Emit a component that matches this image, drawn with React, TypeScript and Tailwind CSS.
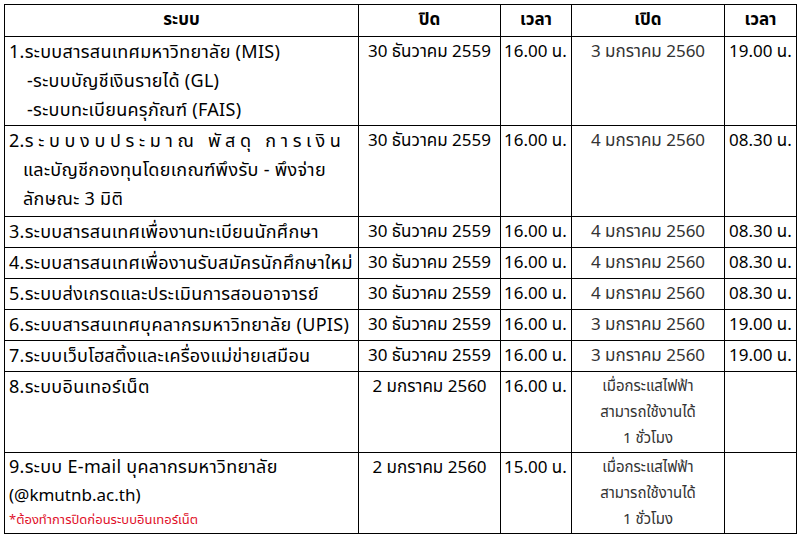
import React from 'react';

type Row = {
  system: React.ReactNode;
  closeDate: string;
  closeTime: string;
  openDate: React.ReactNode;
  openTime: string;
  h: string;
};

const th = 'border border-black font-bold text-center align-middle';
const td = 'border border-black align-top';

const afterPower = (
  <div className="text-[15px] leading-[26px] pt-[1px]">
    เมื่อกระแสไฟฟ้า
    <br />
    สามารถใช้งานได้
    <br />1 ชั่วโมง
  </div>
);

const rows: Row[] = [
  {
    system: (
      <div className="leading-[29px]">
        <div>1.ระบบสารสนเทศมหาวิทยาลัย (MIS)</div>
        <div className="pl-[18px]">-ระบบบัญชีเงินรายได้ (GL)</div>
        <div className="pl-[18px]">-ระบบทะเบียนครุภัณฑ์ (FAIS)</div>
      </div>
    ),
    closeDate: '30 ธันวาคม 2559',
    closeTime: '16.00 น.',
    openDate: '3 มกราคม 2560',
    openTime: '19.00 น.',
    h: 'h-[89px]',
  },
  {
    system: (
      <div className="leading-[29px]">
        <div className="whitespace-nowrap">
          2.<span className="tracking-[0.26em]">ระบบงบประมาณ พัสดุ การเงิน</span>
        </div>
        <div className="pl-[14px] whitespace-nowrap">และบัญชีกองทุนโดยเกณฑ์พึงรับ - พึงจ่าย</div>
        <div className="pl-[14px]">ลักษณะ 3 มิติ</div>
      </div>
    ),
    closeDate: '30 ธันวาคม 2559',
    closeTime: '16.00 น.',
    openDate: '4 มกราคม 2560',
    openTime: '08.30 น.',
    h: 'h-[91px]',
  },
  {
    system: '3.ระบบสารสนเทศเพื่องานทะเบียนนักศึกษา',
    closeDate: '30 ธันวาคม 2559',
    closeTime: '16.00 น.',
    openDate: '4 มกราคม 2560',
    openTime: '08.30 น.',
    h: 'h-[31px]',
  },
  {
    system: '4.ระบบสารสนเทศเพื่องานรับสมัครนักศึกษาใหม่',
    closeDate: '30 ธันวาคม 2559',
    closeTime: '16.00 น.',
    openDate: '4 มกราคม 2560',
    openTime: '08.30 น.',
    h: 'h-[31px]',
  },
  {
    system: '5.ระบบส่งเกรดและประเมินการสอนอาจารย์',
    closeDate: '30 ธันวาคม 2559',
    closeTime: '16.00 น.',
    openDate: '4 มกราคม 2560',
    openTime: '08.30 น.',
    h: 'h-[31px]',
  },
  {
    system: '6.ระบบสารสนเทศบุคลากรมหาวิทยาลัย (UPIS)',
    closeDate: '30 ธันวาคม 2559',
    closeTime: '16.00 น.',
    openDate: '3 มกราคม 2560',
    openTime: '19.00 น.',
    h: 'h-[31px]',
  },
  {
    system: '7.ระบบเว็บโฮสติ้งและเครื่องแม่ข่ายเสมือน',
    closeDate: '30 ธันวาคม 2559',
    closeTime: '16.00 น.',
    openDate: '3 มกราคม 2560',
    openTime: '19.00 น.',
    h: 'h-[31px]',
  },
  {
    system: '8.ระบบอินเทอร์เน็ต',
    closeDate: '2 มกราคม 2560',
    closeTime: '16.00 น.',
    openDate: afterPower,
    openTime: '',
    h: 'h-[81px]',
  },
  {
    system: (
      <div className="leading-[28px]">
        <div>9.ระบบ E-mail บุคลากรมหาวิทยาลัย</div>
        <div className="text-[17px] tracking-normal">(@kmutnb.ac.th)</div>
        <div className="text-[13px] leading-[20px] tracking-normal text-[#e0102a]">*ต้องทำการปิดก่อนระบบอินเทอร์เน็ต</div>
      </div>
    ),
    closeDate: '2 มกราคม 2560',
    closeTime: '15.00 น.',
    openDate: afterPower,
    openTime: '',
    h: 'h-[80px]',
  },
];

export default function App() {
  return (
    <div className="w-[800px] h-[537px] bg-white pt-[4px] pl-[4px] text-black font-['Tahoma','Noto_Sans_Thai','Noto_Sans',sans-serif]">
      <table className="table-fixed border-collapse w-[792px] text-[17px]">
        <colgroup>
          <col className="w-[354px]" />
          <col className="w-[142px]" />
          <col className="w-[71px]" />
          <col className="w-[153px]" />
          <col className="w-[72px]" />
        </colgroup>
        <thead>
          <tr className="h-[32px]">
            <th className={th}>ระบบ</th>
            <th className={th}>ปิด</th>
            <th className={th}>เวลา</th>
            <th className={th}>เปิด</th>
            <th className={th}>เวลา</th>
          </tr>
        </thead>
        <tbody>
          {rows.map((r, i) => (
            <tr key={i} className={r.h}>
              <td className={`${td} px-[4px] pt-[1px] text-[18px] tracking-[0.3px] leading-[29px] whitespace-nowrap`}>{r.system}</td>
              <td className={`${td} text-center leading-[29px] pt-[1px]`}>{r.closeDate}</td>
              <td className={`${td} pl-[3px] leading-[29px] pt-[1px] whitespace-nowrap`}>{r.closeTime}</td>
              <td className={`${td} text-center text-[#333] leading-[29px] pt-[1px]`}>{r.openDate}</td>
              <td className={`${td} pl-[4px] leading-[29px] pt-[1px] whitespace-nowrap`}>{r.openTime}</td>
            </tr>
          ))}
        </tbody>
      </table>
    </div>
  );
}
